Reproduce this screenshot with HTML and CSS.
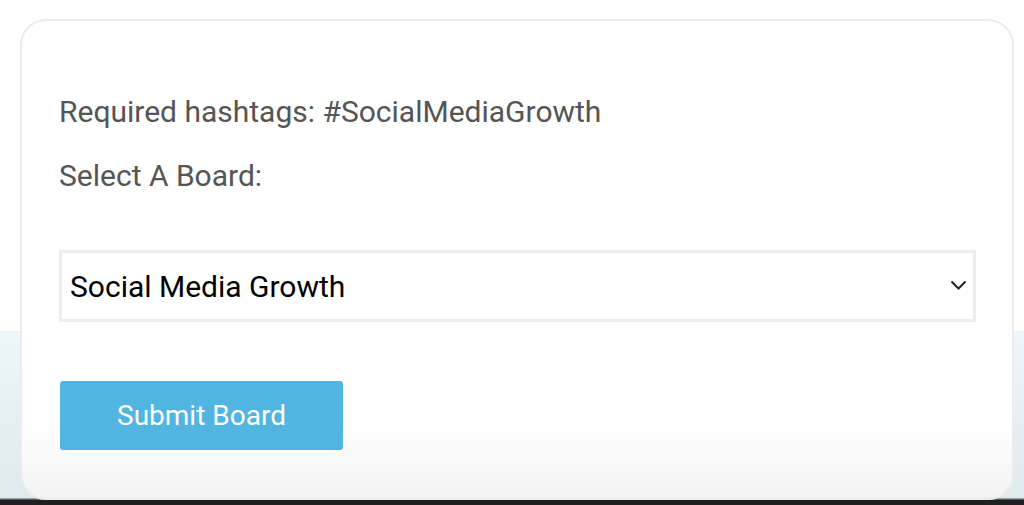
FILE: index.html
```html
<!DOCTYPE html>
<html lang="en">
<head>
<meta charset="utf-8">
<title>Select A Board</title>
<link rel="stylesheet" href="styles.css">
</head>
<body>
<main class="card">
  <p class="info">Required hashtags: #SocialMediaGrowth</p>
  <p class="label">Select A Board:</p>
  <div class="select-wrap">
    <select class="board-select">
      <option>Social Media Growth</option>
    </select>
    <svg class="chevron" width="17" height="11" viewBox="0 0 17 11" aria-hidden="true"><path d="M1.5 1.5 L8.5 8.5 L15.5 1.5" fill="none" stroke="#222" stroke-width="2"/></svg>
  </div>
  <button class="submit" type="button">Submit Board</button>
</main>
</body>
</html>
```

FILE: styles.css
```css
html, body {
  margin: 0;
  padding: 0;
  height: 505px;
  overflow: hidden;
}
body {
  font-family: Roboto, "Liberation Sans", sans-serif;
  background: linear-gradient(to bottom,
    #ffffff 0, #ffffff 331px,
    #f0f0f0 331px, #f0f0f0 332px,
    #ebf7fb 332px, #dfeaee 498px,
    #5a5a5a 499px, #5a5a5a 500px,
    #1f1f1f 500px, #1f1f1f 505px);
  padding-top: 19px;
  box-sizing: border-box;
}
.card {
  box-sizing: border-box;
  margin-left: 20px;
  width: 994px;
  height: 481px;
  border: 2px solid #ececec;
  border-radius: 26px;
  background: linear-gradient(to bottom, #ffffff 0, #ffffff 400px, #f3f3f3 100%);
  padding: 75px 36px 0 37px;
  display: flex;
  flex-direction: column;
  align-items: flex-start;
}
.info, .label {
  margin: 0;
  font-size: 30px;
  line-height: 32px;
  color: #555555;
}
.label {
  margin-top: 32px;
}
.select-wrap {
  position: relative;
  margin-top: 58px;
  align-self: stretch;
}
.board-select {
  appearance: none;
  -webkit-appearance: none;
  display: block;
  width: 100%;
  height: 72px;
  box-sizing: border-box;
  border: 3px solid #ededed;
  border-radius: 0;
  background: #ffffff;
  padding: 0 0 0 8px;
  font-family: Roboto, "Liberation Sans", sans-serif;
  font-size: 30px;
  color: #000000;
}
.chevron {
  position: absolute;
  right: 9px;
  top: 30px;
}
.submit {
  margin-top: 59px;
  margin-left: 1px;
  width: 283px;
  height: 69px;
  border: none;
  border-radius: 3px;
  background: #52b4e0;
  color: #ffffff;
  font-family: Roboto, "Liberation Sans", sans-serif;
  font-size: 28px;
  padding: 0;
}
```
